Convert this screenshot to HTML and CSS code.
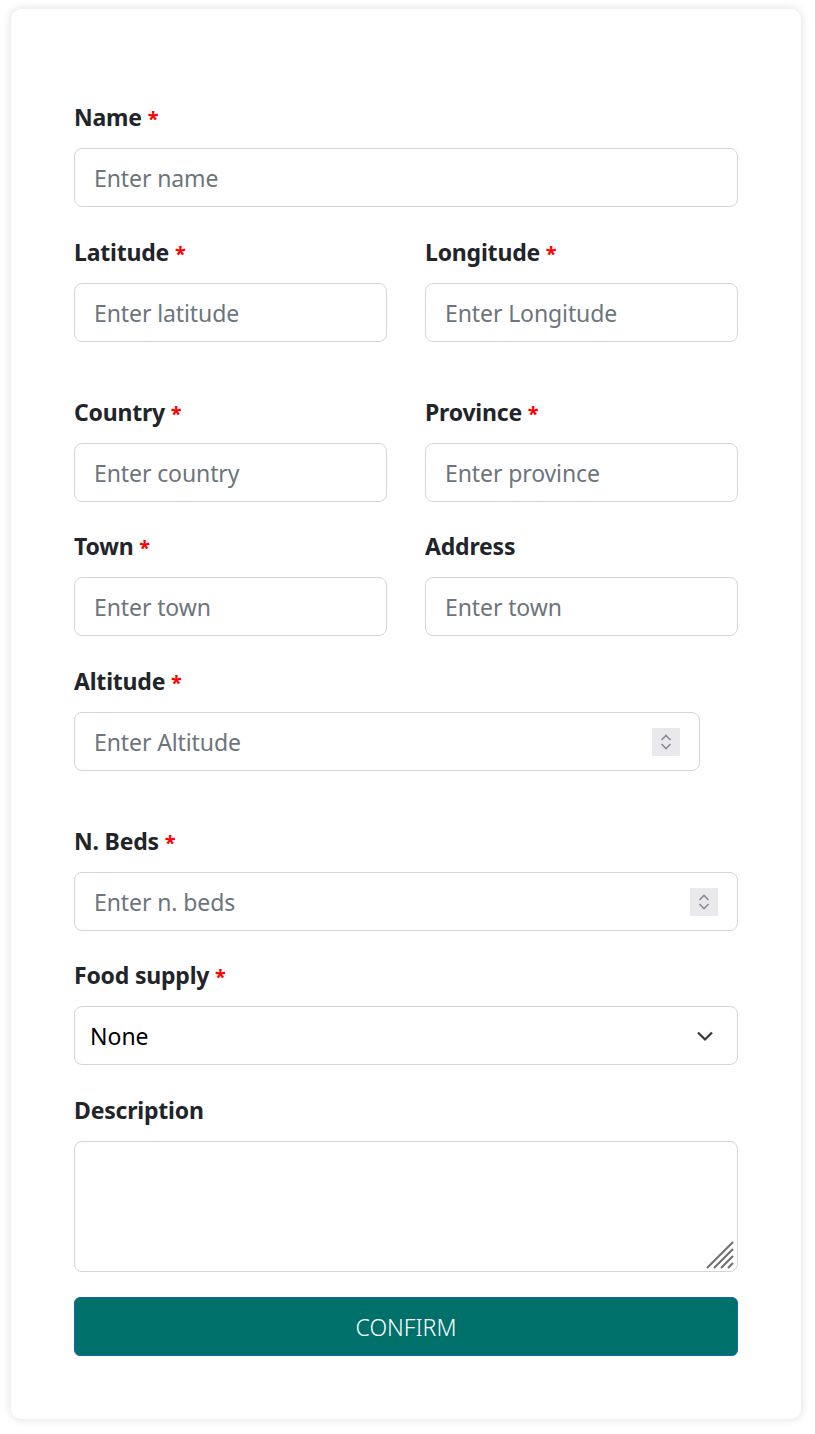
FILE: index.html
```html
<!DOCTYPE html>
<html>
<head>
<meta charset="utf-8">
<link rel="stylesheet" href="styles.css">
</head>
<body>
<div class="card">
  <form class="form">
    <div class="field">
      <label class="label">Name <span class="req">*</span></label>
      <div class="input"><span class="ph">Enter name</span></div>
    </div>
    <div class="row">
      <div class="field">
        <label class="label">Latitude <span class="req">*</span></label>
        <div class="input"><span class="ph">Enter latitude</span></div>
      </div>
      <div class="field">
        <label class="label">Longitude <span class="req">*</span></label>
        <div class="input"><span class="ph">Enter Longitude</span></div>
      </div>
    </div>
    <div class="row spaced">
      <div class="field">
        <label class="label">Country <span class="req">*</span></label>
        <div class="input"><span class="ph">Enter country</span></div>
      </div>
      <div class="field">
        <label class="label">Province <span class="req">*</span></label>
        <div class="input"><span class="ph">Enter province</span></div>
      </div>
    </div>
    <div class="row tight">
      <div class="field">
        <label class="label">Town <span class="req">*</span></label>
        <div class="input"><span class="ph">Enter town</span></div>
      </div>
      <div class="field">
        <label class="label">Address</label>
        <div class="input"><span class="ph">Enter town</span></div>
      </div>
    </div>
    <div class="field">
      <label class="label">Altitude <span class="req">*</span></label>
      <div class="input number narrow"><span class="ph">Enter Altitude</span>
        <span class="spin"><svg width="28" height="28" viewBox="0 0 28 28"><path d="M9.5 12 L14 7.5 L18.5 12 M9.5 16 L14 20.5 L18.5 16" fill="none" stroke="#8a8a94" stroke-width="1.6"/></svg></span>
      </div>
    </div>
    <div class="field spaced">
      <label class="label">N. Beds <span class="req">*</span></label>
      <div class="input number"><span class="ph">Enter n. beds</span>
        <span class="spin"><svg width="28" height="28" viewBox="0 0 28 28"><path d="M9.5 12 L14 7.5 L18.5 12 M9.5 16 L14 20.5 L18.5 16" fill="none" stroke="#8a8a94" stroke-width="1.6"/></svg></span>
      </div>
    </div>
    <div class="field tight">
      <label class="label">Food supply <span class="req">*</span></label>
      <div class="input select"><span class="val">None</span>
        <svg class="chev" width="20" height="14" viewBox="0 0 20 14"><path d="M3 3.5 L10 10.5 L17 3.5" fill="none" stroke="#343a40" stroke-width="2.2"/></svg>
      </div>
    </div>
    <div class="field">
      <label class="label">Description</label>
      <div class="textarea">
        <svg class="grip" width="32" height="32" viewBox="0 0 32 32"><path d="M3 30 L29 4 M10 30 L29 11 M17 30 L29 18 M24 30 L29 25" stroke="#6e6e6e" stroke-width="2"/></svg>
      </div>
    </div>
    <button type="button" class="btn">CONFIRM</button>
  </form>
</div>
</body>
</html>
```
FILE: styles.css
```css
html, body { margin: 0; padding: 0; background: #fff; }
body { font-family: "Noto Sans", "Open Sans", sans-serif; color: #212529; }
.card {
  margin: 9px 14px 15px 11px;
  width: 790px;
  box-sizing: border-box;
  background: #fff;
  border-radius: 10px;
  box-shadow: 0 0 10px rgba(0,0,0,0.14);
  padding: 94px 63px 63px 63px;
}
.form { display: flex; flex-direction: column; }
.field { display: flex; flex-direction: column; }
.form > .field + .field, .form > .row + .field, .form > .field + .row, .form > .row + .row { margin-top: 31px; }
.form > .spaced { margin-top: 56px !important; }
.form > .tight { margin-top: 30px !important; }
.row { display: grid; grid-template-columns: 313px 313px; column-gap: 38px; }
.label {
  font-size: 23px;
  font-weight: 700;
  line-height: 28px;
  height: 28px;
  margin-bottom: 17px;
  letter-spacing: -0.2px;
  white-space: nowrap;
}
.req { color: #ff0000; font-size: 20px; }
.input {
  height: 59px;
  box-sizing: border-box;
  border: 1px solid #d2d6dc;
  border-radius: 8px;
  display: flex;
  align-items: center;
  padding: 0 19px;
  font-size: 23px;
}
.ph { color: #6c757d; letter-spacing: -0.1px; }
.number { justify-content: space-between; }
.narrow { width: 626px; }
.spin {
  width: 28px; height: 28px;
  background: #e9e9ed;
  display: block;
}
.spin svg { display: block; }
.select { padding: 0 22px 0 15px; justify-content: space-between; }
.val { color: #000; }
.chev { display: block; }
.textarea {
  height: 131px;
  box-sizing: border-box;
  border: 1px solid #d2d6dc;
  border-radius: 8px;
  position: relative;
}
.grip { position: absolute; right: 1px; bottom: 1px; }
.btn {
  margin-top: 25px;
  height: 59px;
  border: 1px solid #1565c0;
  border-radius: 6px;
  background: #00716a;
  color: #fff;
  font-family: "Noto Sans", "Open Sans", sans-serif;
  font-size: 23px;
  font-weight: 300;
  cursor: pointer;
}
```
